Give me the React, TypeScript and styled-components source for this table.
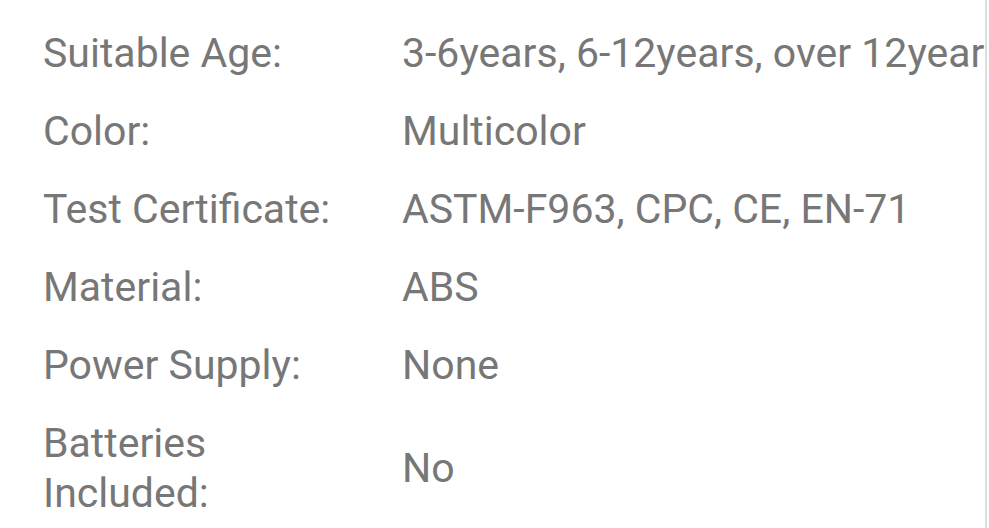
import styled, { createGlobalStyle } from 'styled-components';

const GlobalStyle = createGlobalStyle`
  html, body {
    margin: 0;
    padding: 0;
    background: #fff;
  }
  body {
    font-family: Roboto, "Noto Sans", sans-serif;
  }
`;

type Spec = {
  label: string;
  value: string;
}

const specs: Spec[] = [
  { label: 'Suitable Age:', value: '3-6years, 6-12years, over 12years' },
  { label: 'Color:', value: 'Multicolor' },
  { label: 'Test Certificate:', value: 'ASTM-F963, CPC, CE, EN-71' },
  { label: 'Material:', value: 'ABS' },
  { label: 'Power Supply:', value: 'None' },
  { label: 'Batteries Included:', value: 'No' },
];

export default function App() {
  return (
    <>
      <GlobalStyle />
      <Panel>
        <SpecList>
          {specs.map((s) => (
            <SpecRow key={s.label}>
              <Label>{s.label}</Label>
              <Value>{s.value}</Value>
            </SpecRow>
          ))}
        </SpecList>
      </Panel>
    </>
  )
}

const Panel = styled.div`
  width: 987px;
  height: 528px;
  box-sizing: border-box;
  border-right: 2px solid #dedede;
  overflow: hidden;
  padding: 14px 0 0 43px;
`;
const SpecList = styled.div`
  display: flex;
  flex-direction: column;
`;
const SpecRow = styled.div`
  display: grid;
  grid-template-columns: 359px 1fr;
  align-items: center;
  padding: 14px 0;
  font-size: 41px;
  line-height: 50px;
  color: #777;
`;
const Label = styled.div`
  padding-right: 24px;
`;
const Value = styled.div`
  white-space: nowrap;
`;
